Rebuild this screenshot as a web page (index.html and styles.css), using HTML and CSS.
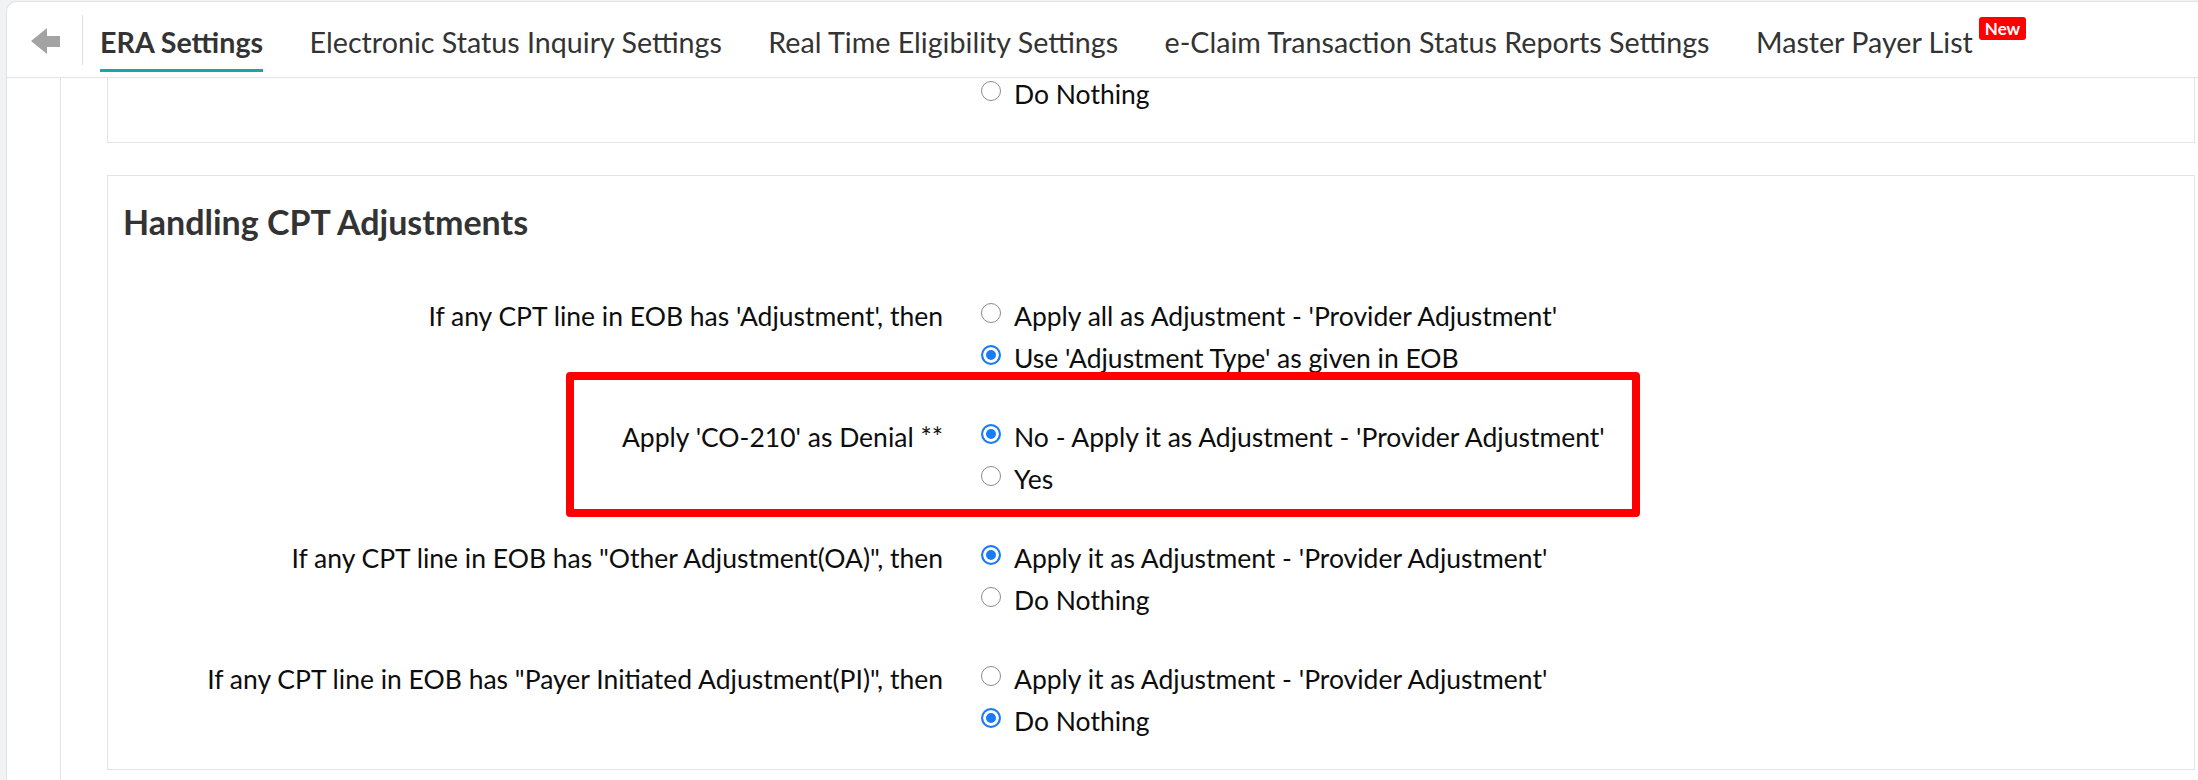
FILE: index.html
```html
<!DOCTYPE html>
<html>
<head>
<meta charset="utf-8">
<title>ERA Settings</title>
<link rel="stylesheet" href="styles.css">
</head>
<body>
<div class="frame">
  <header class="header">
    <div class="back">
      <svg width="29" height="26" viewBox="0 0 29 26"><polygon points="0,13 16,0 16,8 29,8 29,19 16,19 16,26" fill="#a3a3a3"/></svg>
    </div>
    <div class="divider"></div>
    <nav class="tabs">
      <div class="tab active">ERA Settings</div>
      <div class="tab">Electronic Status Inquiry Settings</div>
      <div class="tab">Real Time Eligibility Settings</div>
      <div class="tab">e-Claim Transaction Status Reports Settings</div>
      <div class="tab">Master Payer List<span class="badge">New</span></div>
    </nav>
  </header>
  <div class="main">
    <div class="side"></div>
    <div class="content">
      <section class="box box-top">
        <div class="row">
          <div class="label"></div>
          <div class="opts">
            <label class="opt"><input type="radio" name="r0"><span>Do Nothing</span></label>
          </div>
        </div>
      </section>
      <section class="box">
        <h2 class="title">Handling CPT Adjustments</h2>
        <div class="rows">
          <div class="row">
            <div class="label">If any CPT line in EOB has 'Adjustment', then</div>
            <div class="opts">
              <label class="opt"><input type="radio" name="r1"><span>Apply all as Adjustment - 'Provider Adjustment'</span></label>
              <label class="opt"><input type="radio" name="r1" checked><span>Use 'Adjustment Type' as given in EOB</span></label>
            </div>
          </div>
          <div class="row">
            <div class="label">Apply 'CO-210' as Denial **</div>
            <div class="opts">
              <label class="opt"><input type="radio" name="r2" checked><span>No - Apply it as Adjustment - 'Provider Adjustment'</span></label>
              <label class="opt"><input type="radio" name="r2"><span>Yes</span></label>
            </div>
            <div class="highlight"></div>
          </div>
          <div class="row">
            <div class="label">If any CPT line in EOB has "Other Adjustment(OA)", then</div>
            <div class="opts">
              <label class="opt"><input type="radio" name="r3" checked><span>Apply it as Adjustment - 'Provider Adjustment'</span></label>
              <label class="opt"><input type="radio" name="r3"><span>Do Nothing</span></label>
            </div>
          </div>
          <div class="row">
            <div class="label">If any CPT line in EOB has "Payer Initiated Adjustment(PI)", then</div>
            <div class="opts">
              <label class="opt"><input type="radio" name="r4"><span>Apply it as Adjustment - 'Provider Adjustment'</span></label>
              <label class="opt"><input type="radio" name="r4" checked><span>Do Nothing</span></label>
            </div>
          </div>
        </div>
      </section>
    </div>
  </div>
</div>
</body>
</html>
```
FILE: styles.css
```css
* { box-sizing: border-box; }
html, body { margin: 0; padding: 0; }
body {
  background: #f1f2f4;
  font-family: "Lato", "Open Sans", sans-serif;
  width: 2198px;
  height: 780px;
  overflow: hidden;
}
.frame {
  margin: 1px 0 0 6px;
  height: 779px;
  background: #fff;
  border-top: 1px solid #e2e2e2;
  border-left: 1px solid #e2e2e2;
  border-top-left-radius: 10px;
  overflow: hidden;
  display: flex;
  flex-direction: column;
}
.header {
  height: 76px;
  flex: none;
  border-bottom: 1px solid #e3e3e3;
  display: flex;
  align-items: center;
}
.back {
  width: 53px;
  padding-left: 24px;
  display: flex;
  align-items: center;
  margin-top: 2px;
}
.back svg { display: block; }
.divider {
  width: 1px;
  height: 50px;
  background: #e0e0e0;
  margin-left: 22px;
}
.tabs {
  display: flex;
  height: 100%;
  gap: 46.5px;
  padding-left: 17px;
}
.tab {
  position: relative;
  height: 100%;
  display: flex;
  align-items: center;
  padding-top: 5px;
  font-size: 28.65px;
  color: #333;
  white-space: nowrap;
}
.tab.active { font-weight: 700; }
.tab.active::after {
  content: "";
  position: absolute;
  left: 0;
  right: 0;
  bottom: 5px;
  height: 3px;
  background: #19a6a4;
}
.badge {
  position: absolute;
  left: calc(100% + 6px);
  top: 15px;
  background: #ff0000;
  color: #fff;
  font-weight: 700;
  font-size: 17px;
  line-height: 23px;
  padding: 0 6px;
  border-radius: 3px;
}
.main {
  flex: 1;
  display: flex;
  min-height: 0;
}
.side {
  width: 54px;
  flex: none;
  border-right: 1px solid #e3e3e3;
}
.content {
  flex: 1;
  padding: 0 3px 0 46px;
  overflow: hidden;
}
.box {
  border: 1px solid #e3e3e3;
  background: #fff;
  margin-top: 32px;
  padding-bottom: 27px;
}
.box-top {
  border-top: none;
  margin-top: -5px;
}
.title {
  margin: 0;
  padding: 28px 15px 0;
  font-size: 34px;
  line-height: 36px;
  font-weight: 700;
  color: #333;
}
.rows {
  margin-top: 55px;
  display: flex;
  flex-direction: column;
  gap: 37px;
}
.row {
  position: relative;
  display: flex;
  align-items: flex-start;
}
.label {
  width: 835px;
  flex: none;
  text-align: right;
  font-size: 26.5px;
  line-height: 42px;
  color: #0d0d0d;
}
.opts {
  margin-left: 38px;
  display: flex;
  flex-direction: column;
}
.opt {
  height: 42px;
  display: flex;
  align-items: center;
  font-size: 26.5px;
  color: #0d0d0d;
}
.opt input {
  appearance: none;
  -webkit-appearance: none;
  margin: -7px 13px 0 0;
  width: 20px;
  height: 20px;
  border-radius: 50%;
  border: 1.5px solid #8c8c8c;
  background: #fff;
  flex: none;
}
.opt input:checked {
  border: 2px solid #1a7cf4;
  background: #1a7cf4;
  box-shadow: inset 0 0 0 3px #fff;
}
.highlight {
  position: absolute;
  left: 458px;
  top: -44px;
  width: 1074px;
  height: 145px;
  border: 8px solid #ff0000;
  border-radius: 4px;
  pointer-events: none;
}
```
